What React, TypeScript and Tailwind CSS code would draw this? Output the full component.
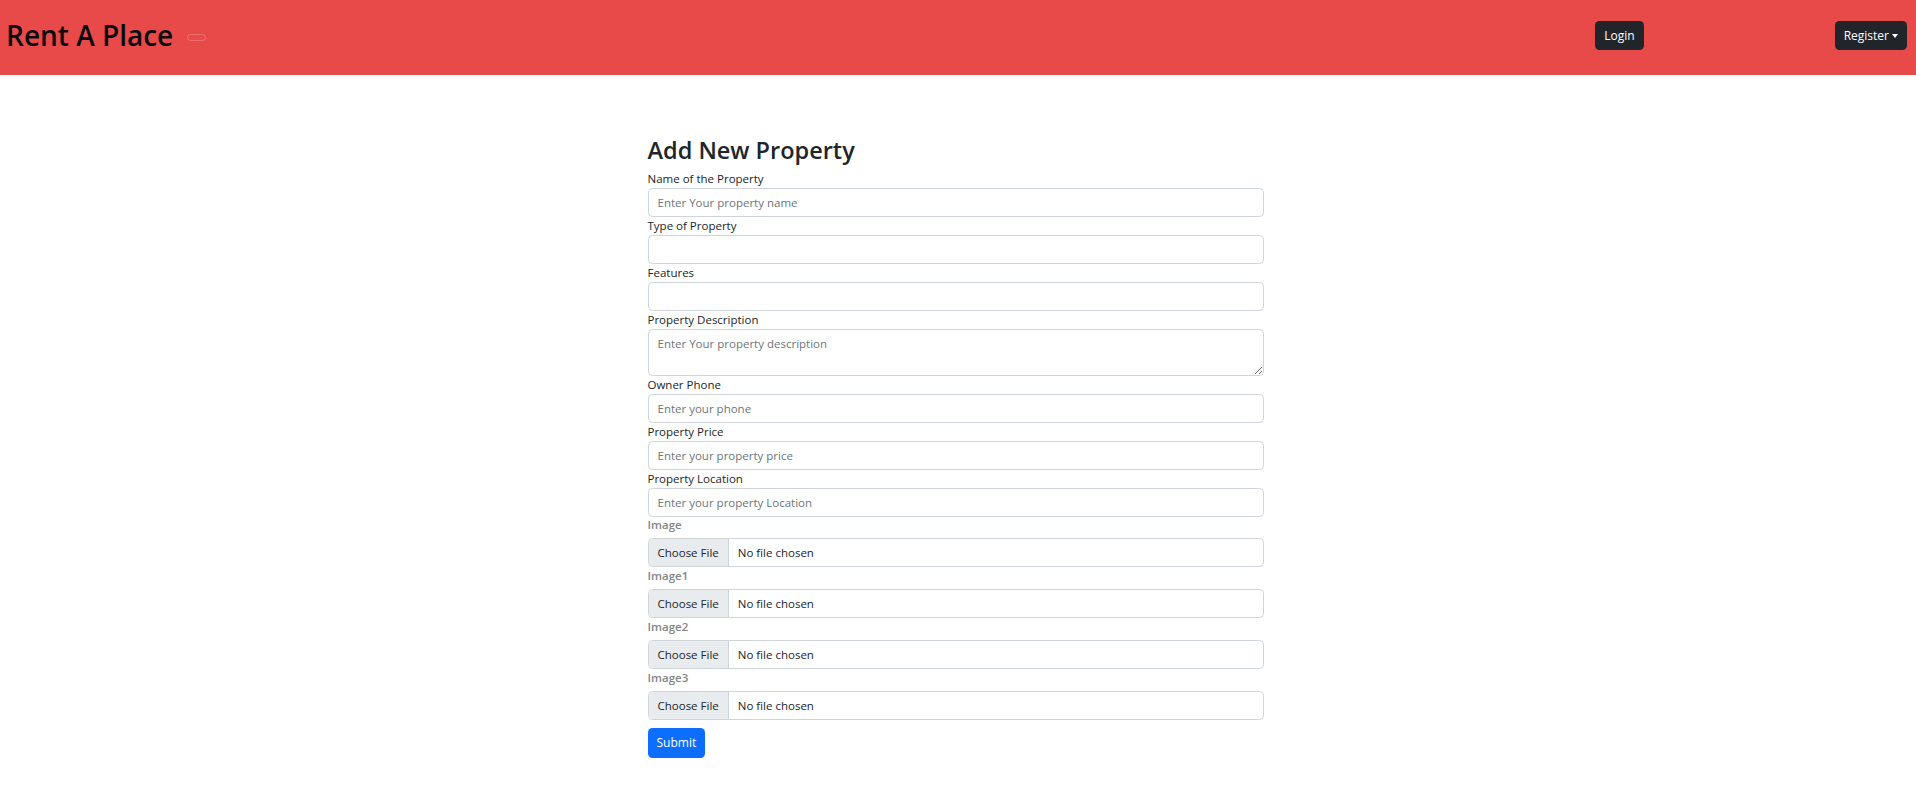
import React from "react";

const Label = ({ children }: { children: React.ReactNode }) => (
  <label className="block text-[11.5px] leading-[18px] text-[#212529]">{children}</label>
);

const TextInput = ({ placeholder }: { placeholder?: string }) => (
  <input
    type="text"
    placeholder={placeholder}
    className="block w-full h-[29px] px-[9px] text-[11.5px] leading-[18px] text-[#212529] border border-[#ced4da] rounded-[4.5px] bg-white outline-none placeholder:text-[#6c757d]"
  />
);

const FileField = ({ label }: { label: string }) => (
  <div>
    <div className="text-[11.5px] leading-[18px] mb-[4px] font-semibold text-[#858585]">{label}</div>
    <div className="flex h-[29px] w-full border border-[#ced4da] rounded-[4.5px] overflow-hidden text-[11.5px] text-[#212529]">
      <div className="flex items-center px-[9px] bg-[#e9ecef] border-r border-[#ced4da]">Choose File</div>
      <div className="flex items-center pl-[9px]">No file chosen</div>
    </div>
  </div>
);

export default function App() {
  return (
    <div className="min-h-screen bg-white font-['Open_Sans',sans-serif]">
      <nav className="h-[75px] bg-[#e84a4a] flex items-center pl-[6px] pr-[9px]">
        <span className="text-[28px] leading-none font-semibold text-[#0a0a0a] -mt-[6px]">Rent A Place</span>
        <span className="ml-[14px] w-[19px] h-[7px] rounded-full border border-white/20" />
        <div className="ml-auto flex items-center -mt-[4px]">
          <button className="h-[28.5px] px-[9px] rounded-[4.5px] bg-[#212529] text-white text-[12px]">Login</button>
          <button className="ml-[191px] h-[28.5px] px-[9px] rounded-[4.5px] bg-[#212529] text-white text-[12px] flex items-center">
            Register
            <span className="ml-[3px] w-0 h-0 border-l-[3.5px] border-r-[3.5px] border-t-[4px] border-l-transparent border-r-transparent border-t-white" />
          </button>
        </div>
      </nav>
      <main className="pt-[62px] flex justify-center pr-[5px]">
        <form className="w-[616px]" onSubmit={(e) => e.preventDefault()}>
          <h2 className="text-[23.5px] leading-[26px] font-semibold text-[#212529] mb-[7px]">Add New Property</h2>
          <Label>Name of the Property</Label>
          <TextInput placeholder="Enter Your property name" />
          <Label>Type of Property</Label>
          <TextInput />
          <Label>Features</Label>
          <TextInput />
          <Label>Property Description</Label>
          <textarea
            placeholder="Enter Your property description"
            className="block w-full h-[47px] px-[9px] py-[4.5px] text-[11.5px] leading-[18px] text-[#212529] border border-[#ced4da] rounded-[4.5px] outline-none placeholder:text-[#6c757d]"
          />
          <Label>Owner Phone</Label>
          <TextInput placeholder="Enter your phone" />
          <Label>Property Price</Label>
          <TextInput placeholder="Enter your property price" />
          <Label>Property Location</Label>
          <TextInput placeholder="Enter your property Location" />
          <div className="-mt-[1px]">
            <FileField label="Image" />
            <FileField label="Image1" />
            <FileField label="Image2" />
            <FileField label="Image3" />
          </div>
          <button className="mt-[8px] h-[29.5px] px-[9px] rounded-[4.5px] bg-[#0d6efd] text-white text-[12px]">Submit</button>
        </form>
      </main>
    </div>
  );
}
